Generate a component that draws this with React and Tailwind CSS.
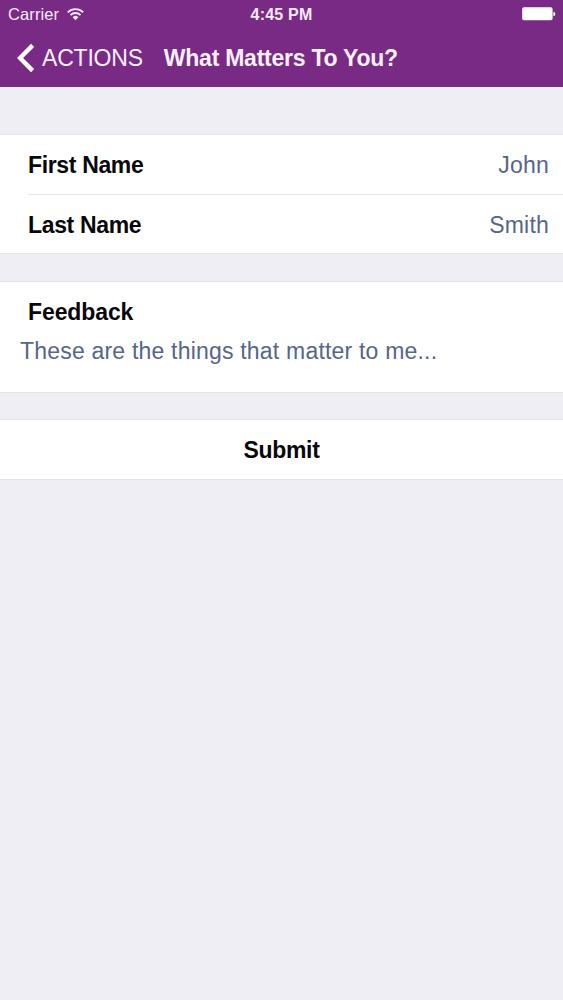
const boldText = "text-[23px] leading-[28px] font-bold";
const cellClass = "flex items-center justify-between pr-[14px]";
const valueClass = "text-[23px] leading-[28px] text-[#56658a]";

const fields = [
  { label: "First Name", value: "John", layout: "h-[60px] pt-px border-b border-[#e6e6e9]" },
  { label: "Last Name", value: "Smith", layout: "h-[58px] pt-px" },
];

function WifiIcon() {
  return (
    <svg className="ml-[8px] h-[13px] w-[17px]" viewBox="0 0 17 13" fill="none" stroke="#fbeaff" strokeWidth="1.9">
      <path d="M0.8 4.3 A11 11 0 0 1 16.2 4.3" />
      <path d="M3.5 7.1 A7.1 7.1 0 0 1 13.5 7.1" />
      <path d="M5.6 9.3 A4.1 4.1 0 0 1 11.4 9.3 L8.5 12.2 Z" fill="#fbeaff" stroke="none" />
    </svg>
  );
}

function BatteryIcon() {
  return (
    <svg className="h-[14px] w-[34px]" viewBox="0 0 34 14" fill="white">
      <rect x="0.2" y="0.3" width="30.4" height="13" rx="1.8" />
      <path d="M31.4 4.8 Q33.4 5.2 33.4 7 Q33.4 8.8 31.4 9.2 Z" />
    </svg>
  );
}

function StatusBar() {
  return (
    <div className="grid h-[28px] grid-cols-3 items-center px-[8px] text-[#fbeaff]">
      <div className="flex items-center">
        <span className="text-[16.5px] leading-[20px] tracking-[0.1px]">Carrier</span>
        <WifiIcon />
      </div>
      <span className="pt-[2px] text-center text-[16px] leading-[20px] font-bold tracking-[0.2px]">
        4:45 PM
      </span>
      <div className="-mr-px flex justify-end">
        <BatteryIcon />
      </div>
    </div>
  );
}

function NavBar() {
  return (
    <div className="flex h-[59px] items-center pl-[17px] text-[#fdf1ff]">
      <button className="flex items-center">
        <svg className="h-[30px] w-[18px]" viewBox="0 0 18 30" fill="none" stroke="white" strokeWidth="4.4">
          <path d="M15.6 2.4 L3 15 L15.6 27.6" />
        </svg>
        <span className="ml-[7px] text-[23px] leading-[28px] tracking-[-0.2px]">ACTIONS</span>
      </button>
      <h1 className={`ml-[21px] tracking-[-0.25px] ${boldText}`}>What Matters To You?</h1>
    </div>
  );
}

function App() {
  return (
    <div className="flex h-[1000px] w-[563px] flex-col overflow-hidden bg-[#efeef4] font-['Liberation_Sans',Arial,sans-serif] whitespace-nowrap text-[#08080a]">
      {/* Header */}
      <header className="h-[87px] shrink-0 bg-[#782a84]">
        <StatusBar />
        <NavBar />
      </header>

      {/* Name fields */}
      <section className="mt-[47px] border-y border-[#e4e2e7] bg-white pl-[28px]">
        {fields.map((field) => (
          <div key={field.label} className={`${cellClass} ${field.layout}`}>
            <span className={`${boldText} tracking-[-0.35px]`}>{field.label}</span>
            <span className={`${valueClass} tracking-[0.2px]`}>{field.value}</span>
          </div>
        ))}
      </section>

      {/* Feedback */}
      <section className="mt-[27px] h-[112px] border-y border-[#e4e2e7] bg-white pt-[16px]">
        <h2 className={`pl-[28px] tracking-[-0.1px] ${boldText}`}>Feedback</h2>
        <p className={`mt-[11px] pl-[20px] tracking-[0.2px] ${valueClass}`}>
          These are the things that matter to me...
        </p>
      </section>

      {/* Submit */}
      <button className={`mt-[26px] h-[61px] border-y border-[#e4e2e7] bg-white text-center tracking-[-0.3px] ${boldText}`}>
        Submit
      </button>
    </div>
  );
}

export default App;
